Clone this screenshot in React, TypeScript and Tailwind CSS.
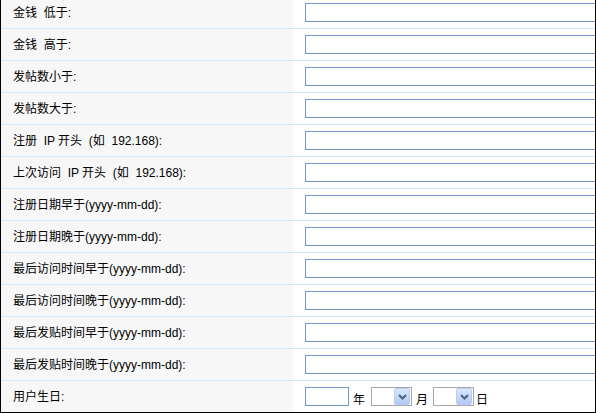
const fields = [
  "金钱  低于:",
  "金钱  高于:",
  "发帖数小于:",
  "发帖数大于:",
  "注册  IP 开头  (如  192.168):",
  "上次访问  IP 开头  (如  192.168):",
  "注册日期早于(yyyy-mm-dd):",
  "注册日期晚于(yyyy-mm-dd):",
  "最后访问时间早于(yyyy-mm-dd):",
  "最后访问时间晚于(yyyy-mm-dd):",
  "最后发贴时间早于(yyyy-mm-dd):",
  "最后发贴时间晚于(yyyy-mm-dd):",
];

const DropSelect = () => (
  <div className="flex h-[19px] w-[41px] shrink-0 items-center justify-end border border-[#a7a6aa] bg-white pr-px">
    <div className="flex h-[17px] w-[16px] items-center justify-center rounded-[2px] border border-[#b6cdf7] bg-gradient-to-b from-[#dbe7fd] to-[#b2c9f4]">
      <svg width="9" height="6" viewBox="0 0 9 6">
        <path d="M1 1 L4.5 4.5 L8 1" fill="none" stroke="#4d6185" strokeWidth="2" />
      </svg>
    </div>
  </div>
);

export default function App() {
  return (
    <div
      className="h-[413px] w-[596px] overflow-hidden border-x border-b border-black bg-white text-[12px] text-black"
      style={{ fontFamily: '"Liberation Sans", "Noto Sans CJK SC", sans-serif' }}
    >
      <div className="-mt-[3px]">
        {fields.map((label) => (
          <div key={label} className="flex h-8 border-b border-[#c8ecf9]">
            <div className="flex w-[292px] shrink-0 items-center whitespace-pre bg-[#f7f7f7] pl-3">
              {label}
            </div>
            <div className="flex min-w-0 flex-1 items-center bg-white pl-3">
              <input
                type="text"
                className="h-[19px] w-[300px] shrink-0 border border-[#7296c8] bg-white outline-none"
              />
            </div>
          </div>
        ))}
        <div className="flex h-[31px]">
          <div className="flex w-[292px] shrink-0 items-center bg-[#f7f7f7] pl-3">用户生日:</div>
          <div className="flex min-w-0 flex-1 items-center bg-white pl-3">
            <input
              type="text"
              className="h-[19px] w-[44px] shrink-0 border border-[#7296c8] bg-white outline-none"
            />
            <span className="ml-1 mr-[6px] mt-[6px]">年</span>
            <DropSelect />
            <span className="ml-1 mr-[5px] mt-[6px]">月</span>
            <DropSelect />
            <span className="ml-[2px] mt-[6px]">日</span>
          </div>
        </div>
      </div>
    </div>
  );
}
